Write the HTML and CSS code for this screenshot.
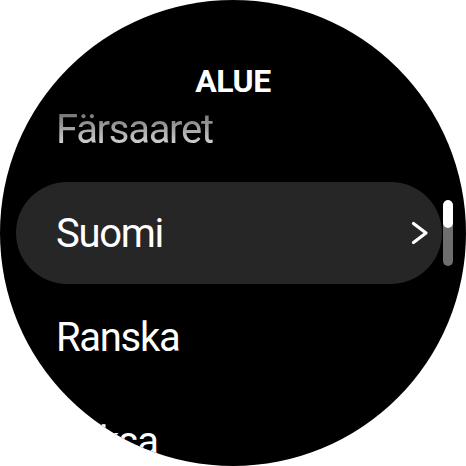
FILE: index.html
```html
<!DOCTYPE html>
<html lang="fi">
<head>
<meta charset="utf-8">
<title>Alue</title>
<link rel="stylesheet" href="styles.css">
</head>
<body>
<div class="watch">
  <div class="title">ALUE</div>
  <ul class="list">
    <li class="row"><span class="label faded">Färsaaret</span></li>
    <li class="row selected">
      <span class="label">Suomi</span>
      <svg class="chev" width="20" height="26" viewBox="0 0 20 26"><path d="M3.5 3.5 L16 13 L3.5 22.5" fill="none" stroke="#fff" stroke-width="3.2" stroke-linecap="round" stroke-linejoin="round"/></svg>
    </li>
    <li class="row"><span class="label">Ranska</span></li>
    <li class="row"><span class="label">Saksa</span></li>
  </ul>
  <div class="scrollbar"><div class="thumb"></div></div>
</div>
</body>
</html>
```

FILE: styles.css
```css
html, body {
  margin: 0;
  padding: 0;
  background: #ffffff;
}
.watch {
  position: relative;
  width: 466px;
  height: 466px;
  border-radius: 50%;
  background: #000;
  overflow: hidden;
  font-family: Roboto, "Liberation Sans", sans-serif;
  color: #fff;
}
.title {
  box-sizing: border-box;
  height: 78px;
  padding-top: 69px;
  line-height: 24px;
  text-align: center;
  font-size: 32px;
  font-weight: 700;
  letter-spacing: -0.5px;
}
.list {
  list-style: none;
  margin: 0;
  padding: 0;
  display: flex;
  flex-direction: column;
  gap: 2px;
}
.row {
  box-sizing: border-box;
  height: 102px;
  margin: 0 24px 0 16px;
  padding: 0 12px 0 40px;
  display: flex;
  align-items: center;
  justify-content: space-between;
  border-radius: 51px;
}
.label {
  font-size: 40px;
  line-height: 48px;
  letter-spacing: -1.3px;
  position: relative;
  top: 1px;
}
.faded {
  background: linear-gradient(#5e5e5e, #f0f0f0);
  -webkit-background-clip: text;
  background-clip: text;
  color: transparent;
}
.selected {
  background: #262626;
}
.chev {
  display: block;
}
.scrollbar {
  position: absolute;
  left: 443px;
  top: 200px;
  width: 10px;
  height: 66px;
  border-radius: 5px;
  background: #6e6e6e;
  overflow: hidden;
}
.thumb {
  height: 28px;
  border-radius: 5px;
  background: #fff;
}
```
